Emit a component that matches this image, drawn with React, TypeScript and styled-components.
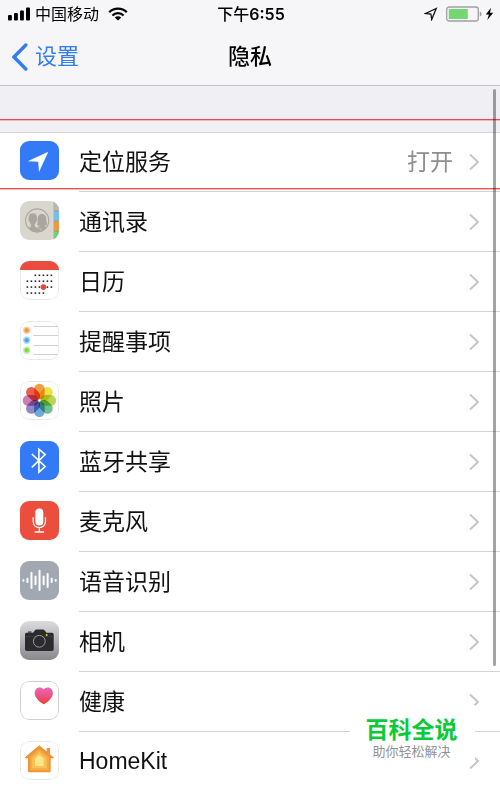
import React from 'react';
import styled, { createGlobalStyle } from 'styled-components';

const GlobalStyle = createGlobalStyle`
  *, *::before, *::after { box-sizing: border-box; }
  body {
    margin: 0;
    background: #fff;
    color: #111;
    font-family: "Liberation Sans", "Noto Sans CJK SC", sans-serif;
  }
`;

const Screen = styled.div`
  position: relative;
  overflow: hidden;
`;

const Header = styled.header`
  background: #f6f6f8;
  border-bottom: 1px solid #c4c4c7;
`;

const StatusBar = styled.div`
  display: grid;
  grid-template-columns: 1fr auto 1fr;
  align-items: center;
  height: 28px;
  padding: 0 6px 0 8px;
  font-family: Inter, "Noto Sans CJK SC", sans-serif;
  font-size: 16px;
  line-height: 28px;
  color: #000;
`;

const StatusGroup = styled.div<{ $end?: boolean }>`
  display: flex;
  align-items: center;
  justify-content: ${(p) => (p.$end ? 'flex-end' : 'flex-start')};
  gap: ${(p) => (p.$end ? 3 : 5)}px;

  svg { flex: none; }
  svg + svg:nth-child(2) { margin-left: 5px; }
  span + svg { margin-left: 4px; }
`;

const Clock = styled.time`
  font-weight: 500;
`;

const Digits = styled.span`
  font-weight: 600;
`;

const NavBar = styled.nav`
  display: grid;
  grid-template-columns: 1fr auto 1fr;
  align-items: center;
  height: 57px;
  padding: 0 12px;
`;

const BackLink = styled.a`
  display: flex;
  align-items: center;
  gap: 7px;
  font-size: 22px;
  line-height: 32px;
  color: #347cf6;
  text-decoration: none;
`;

const Title = styled.h1`
  margin: 0;
  font-size: 22px;
  line-height: 32px;
  font-weight: 500;
  color: #000;
`;

const SectionGap = styled.div`
  height: 47px;
  background: #efeff4;
  border-bottom: 1px solid #d6d6da;
`;

const List = styled.ul`
  margin: 0;
  padding: 0;
  list-style: none;
`;

const Item = styled.li`
  height: 60px;

  &:first-child { height: 59px; }
  &:last-child { height: 58px; }
`;

const RowLink = styled.a`
  display: flex;
  height: 100%;
  padding-left: 20px;
  gap: 20px;
  color: inherit;
  text-decoration: none;
`;

const AppIcon = styled.svg`
  flex: none;
  width: 39px;
  height: 39px;
  margin-top: 9px;
  border-radius: 9px;

  ${Item}:first-child & { margin-top: 8px; }
`;

const RowBody = styled.div`
  flex: 1;
  display: flex;
  align-items: center;
  gap: 16px;
  padding-right: 20px;
  border-bottom: 1px solid #d3d3d6;
  font-size: 23px;
  line-height: 34px;

  ${Item}:last-child & { border-bottom: 0; }
`;

const Label = styled.span`
  flex: 1;
`;

const Value = styled.span`
  color: #8e8e93;
`;

const Petal = styled.rect`
  mix-blend-mode: multiply;
`;

const Flower = styled.g`
  isolation: isolate;
`;

const Guide = styled.div<{ $y: number }>`
  position: absolute;
  left: 0;
  right: 0;
  top: ${(p) => p.$y}px;
  height: 1px;
  background: #f24a4a;
  box-shadow: 0 1px 0 rgba(242, 74, 74, 0.35);
  pointer-events: none;
`;

const ScrollThumb = styled.div`
  position: absolute;
  top: 89px;
  right: 4px;
  width: 3px;
  height: 577px;
  border-radius: 2px;
  background: rgba(0, 0, 0, 0.36);
`;

const Watermark = styled.aside`
  position: absolute;
  right: 25px;
  bottom: 27px;
  width: 125px;
  height: 58px;
  padding-top: 10px;
  padding-right: 2px;
  background: #fff;
  text-align: center;
`;

const Brand = styled.div`
  font-size: 23px;
  line-height: 30px;
  font-weight: 700;
  color: #08cb37;
`;

const Slogan = styled.div`
  font-size: 13px;
  line-height: 13px;
  color: #929292;
`;

const Frame = ({ stroke = '#e9e9e9' }: { stroke?: string }) => (
  <rect x="0.5" y="0.5" width="38" height="38" rx="8.5" fill="none" stroke={stroke} />
);

const LocationIcon = () => (
  <>
    <rect width="39" height="39" fill="#347af6" />
    <path d="M28.3 10.8 7.7 20.3 18.2 20.7 19 31Z" fill="#fff" />
  </>
);

const ContactsIcon = () => (
  <>
    <rect width="39" height="39" fill="#d9d7cd" />
    <rect x="34" width="5" height="10" fill="#b9b7ae" />
    <rect x="34" y="10" width="5" height="10" fill="#6fc1f5" />
    <rect x="34" y="20" width="5" height="10" fill="#f39a38" />
    <rect x="34" y="30" width="5" height="9" fill="#6bd36b" />
    <path d="M34 10h5M34 20h5M34 30h5" stroke="#96958c" strokeWidth="0.8" />
    <path d="M33.8 0v39" stroke="#b1afa6" strokeWidth="0.8" />
    <clipPath id="contact-disc"><circle cx="17.2" cy="19.5" r="11.4" /></clipPath>
    <g clipPath="url(#contact-disc)" fill="#aaa59e">
      <path d="M21.8 13c3.400 0 4.600 2.500 4.600 5.800 0 2.200.4 3.800 1.100 4.800-1 .7-2.200 1-3.400 1.100l5.200 2.300V32H17v-5.500l3-1.800c-1.200-.1-2.300-.4-3-1 .8-1.200.6-3 .6-4.900 0-3.200 1.200-5.800 4.200-5.800Z" />
      <path d="M12.8 12.100c-3.300 0-4.600 2.300-4.300 5.300-.6.800-.1 2.600.7 3.100.3 1.300.8 2.100 1.500 2.800v2.300L4 28.500V33h17v-4.800l-6-2.600v-2.300c.7-.7 1.200-1.500 1.500-2.800.8-.5 1.200-2.300.6-3.100.4-3-1-5.300-4.300-5.300Z" stroke="#d9d7cd" strokeWidth="0.5" />
    </g>
    <circle cx="17.2" cy="19.5" r="11.6" fill="none" stroke="#aaa59e" strokeWidth="1.1" />
  </>
);

const calendarRows: [number, number, number][] = [[14.3, 2, 6], [20.2, 0, 6], [26.1, 0, 6], [32.1, 0, 4]];

const CalendarIcon = () => (
  <>
    <rect width="39" height="39" fill="#fff" />
    <Frame />
    <rect width="39" height="9" fill="#ea4d3d" />
    {calendarRows.map(([y, from, to]) =>
      Array.from({ length: to - from + 1 }, (_, i) => (
        <rect key={`${y}-${i}`} x={6.6 + (from + i) * 4} y={y - 0.8} width="1.6" height="1.6" fill="#222" />
      )),
    )}
    <circle cx="23.4" cy="26.1" r="2.8" fill="#f04438" />
  </>
);

const RemindersIcon = () => (
  <>
    <rect width="39" height="39" fill="#fff" />
    <Frame />
    <path d="M13.3 5.5H38M13.3 14.5H38M13.3 24.5H38M13.3 33.5H38" stroke="#d0d0d0" />
    {[['#f19a37', 9.3], ['#4ba9f0', 19.3], ['#7cd651', 29.3]].map(([color, y]) => (
      <g key={color} fill={color as string}>
        <circle cx="6.7" cy={y} r="3.7" opacity="0.45" />
        <circle cx="6.7" cy={y} r="2.2" />
      </g>
    ))}
  </>
);

const petals = ['#f19a38', '#efe037', '#b5d44a', '#67bd8b', '#69a5dc', '#8f7fc4', '#c678ae', '#ea5545'];

const PhotosIcon = () => (
  <>
    <rect width="39" height="39" fill="#fff" />
    <Frame />
    <Flower>
      {petals.map((color, i) => (
        <Petal
          key={color}
          x="14.1"
          y="2.7"
          width="10.6"
          height="15.6"
          rx="5.3"
          fill={color}
          opacity="0.95"
          transform={`rotate(${i * 45} 19.4 19.4)`}
        />
      ))}
    </Flower>
  </>
);

const BluetoothIcon = () => (
  <>
    <rect width="39" height="39" fill="#347af6" />
    <path d="M11.8 13 25.2 25.6 18.9 31.2V8.2L25.2 13.6 11.8 26.4" fill="none" stroke="#fff" strokeWidth="1.6" />
  </>
);

const MicrophoneIcon = () => (
  <>
    <rect width="39" height="39" fill="#ec4e3d" />
    <rect x="15.3" y="7.6" width="8" height="16.9" rx="4" fill="#fff" />
    <path d="M13.2 16.3v4c0 8.4 12.3 8.4 12.3 0v-4M19.3 26.6v4.4M14.7 31h9.300" fill="none" stroke="#fff" strokeWidth="1.3" />
  </>
);

const SpeechIcon = () => (
  <>
    <rect width="39" height="39" fill="#a2a8b2" />
    {[0.4, 1.7, 7.7, 3.8, 9.7, 3.8, 6.5, 1.7, 0.4].map((h, i) => (
      <path key={i} d={`M${3.4 + i * 4.04} ${19.4 - h}v${h * 2}`} stroke="#fff" strokeWidth="2" strokeLinecap="round" />
    ))}
  </>
);

const CameraIcon = () => (
  <>
    <linearGradient id="camera-bg" x2="0" y2="1">
      <stop stopColor="#dcdcdf" />
      <stop offset="1" stopColor="#89888d" />
    </linearGradient>
    <rect width="39" height="39" fill="url(#camera-bg)" />
    <path d="M8 10.5h3.5v1H8ZM6.5 11.7H13l2-2.4q.5-.8 1.5-.8h6.5q1 0 1.5.8l2 2.4h5.5q1.7 0 1.7 1.7v14.8q0 1.7-1.7 1.7H6.8Q5 29.9 5 28.2V13.4q0-1.7 1.5-1.7Z" fill="#2b2b2d" />
    <path d="M5 15.5h28.7" stroke="#444446" strokeWidth="0.6" />
    <circle cx="19.3" cy="20.3" r="5.9" fill="#2b2b2d" stroke="#9a9a9c" />
    <circle cx="26.7" cy="14" r="1" fill="#f7c928" />
  </>
);

const HealthIcon = () => (
  <>
    <linearGradient id="heart" x2="0" y2="1">
      <stop stopColor="#ec66b4" />
      <stop offset="0.5" stopColor="#ea5287" />
      <stop offset="1" stopColor="#ee4030" />
    </linearGradient>
    <rect width="39" height="39" fill="#fff" />
    <Frame stroke="#cfcfcf" />
    <path d="M23.8 23.3C19.4 20.8 14.7 17 14.7 12c0-5.8 6.3-7.3 9.1-3.6 2.8-3.7 9.1-2.2 9.1 3.6 0 5-4.7 8.8-9.1 11.3Z" fill="url(#heart)" />
  </>
);

const HomeIcon = () => (
  <>
    <rect width="39" height="39" fill="#fff" />
    <Frame />
    <path d="M19.3 4.3 26.7 10.4V7H30v6.2l4 3.2-1 1.2-2.3-.6v13q0 1.3-1.3 1.3H9.4Q8 31.3 8 30V17l-2.3.6-1-1.2Z" fill="#ee9436" />
    <path d="M19.3 7.9 29 16v13.6H9.8V16Z" fill="#f4ab43" />
    <path d="m19.3 10.9 7.2 6v10.3H12.2V16.9Z" fill="#f7c356" />
    <path d="m19.3 13.9 4.3 3.7v7.5H15v-7.5Z" fill="#fce58b" />
  </>
);

const Chevron = () => (
  <svg width="11" height="18" viewBox="0 0 11 18" aria-hidden="true">
    <path d="m1 1.5 8 7.5-8 7.5" fill="none" stroke="#c5c5ca" strokeWidth="2" />
  </svg>
);

interface Entry {
  label: string;
  Icon: () => React.JSX.Element;
  value?: string;
}

const entries: Entry[] = [
  { label: '定位服务', Icon: LocationIcon, value: '打开' },
  { label: '通讯录', Icon: ContactsIcon },
  { label: '日历', Icon: CalendarIcon },
  { label: '提醒事项', Icon: RemindersIcon },
  { label: '照片', Icon: PhotosIcon },
  { label: '蓝牙共享', Icon: BluetoothIcon },
  { label: '麦克风', Icon: MicrophoneIcon },
  { label: '语音识别', Icon: SpeechIcon },
  { label: '相机', Icon: CameraIcon },
  { label: '健康', Icon: HealthIcon },
  { label: 'HomeKit', Icon: HomeIcon },
];

export default function App() {
  return (
    <Screen lang="zh-CN">
      <GlobalStyle />
      <Header>
        <StatusBar>
          <StatusGroup>
            <svg width="22" height="14" viewBox="0 0 22 14" aria-hidden="true">
              <rect y="8" width="3.9" height="5.5" rx="1" />
              <rect x="6" y="6" width="3.9" height="7.5" rx="1" />
              <rect x="12" y="3.4" width="3.9" height="10.1" rx="1" />
              <rect x="18" y="0.5" width="4" height="13" rx="1" />
            </svg>
            <span>中国移动</span>
            <svg width="20" height="14" viewBox="0 0 20 14" aria-hidden="true">
              <path d="M1.2 5.2a12.4 12.4 0 0 1 17.6 0M4.4 8.5a7.9 7.9 0 0 1 11.2 0" fill="none" stroke="#000" strokeWidth="2.3" />
              <path d="M10 13.6 6.8 10.5a4.5 4.5 0 0 1 6.4 0Z" />
            </svg>
          </StatusGroup>
          <Clock>下午<Digits>6:55</Digits></Clock>
          <StatusGroup $end>
            <svg width="14" height="14" viewBox="0 0 14 14" aria-hidden="true">
              <path d="M12.2 1.5 1.6 6.5l5.3.5.8 5.5Z" fill="none" stroke="#111" strokeWidth="1.3" />
            </svg>
            <svg width="36" height="16" viewBox="0 0 36 16" aria-hidden="true">
              <rect x="0.7" y="1" width="31.6" height="14" rx="2.5" fill="none" stroke="#a0a0a2" strokeWidth="1.3" />
              <rect x="2.8" y="3" width="19" height="10" fill="#75d772" />
              <path d="M33.8 5.5q1.8.5 1.8 2.5t-1.8 2.5Z" fill="#a0a0a2" />
            </svg>
            <svg width="9" height="14" viewBox="0 0 9 14" aria-hidden="true">
              <path d="M6 .8.8 7.5h3.1L2.3 13 8.2 5.8H5Z" />
            </svg>
          </StatusGroup>
        </StatusBar>
        <NavBar>
          <BackLink href="#settings">
            <svg width="16" height="28" viewBox="0 0 16 28" aria-hidden="true">
              <path d="M13.8 2 2 14l11.8 12" fill="none" stroke="#347cf6" strokeWidth="3.4" strokeLinecap="round" />
            </svg>
            设置
          </BackLink>
          <Title>隐私</Title>
        </NavBar>
      </Header>
      <SectionGap />
      <main>
        <List>
          {entries.map(({ label, Icon, value }) => (
            <Item key={label}>
              <RowLink href={`#${label}`}>
                <AppIcon viewBox="0 0 39 39" aria-hidden="true">
                  <Icon />
                </AppIcon>
                <RowBody>
                  <Label>{label}</Label>
                  {value && <Value>{value}</Value>}
                  <Chevron />
                </RowBody>
              </RowLink>
            </Item>
          ))}
        </List>
      </main>
      <Guide $y={119} />
      <Guide $y={188} />
      <ScrollThumb />
      <Watermark>
        <Brand>百科全说</Brand>
        <Slogan>助你轻松解决</Slogan>
      </Watermark>
    </Screen>
  );
}
